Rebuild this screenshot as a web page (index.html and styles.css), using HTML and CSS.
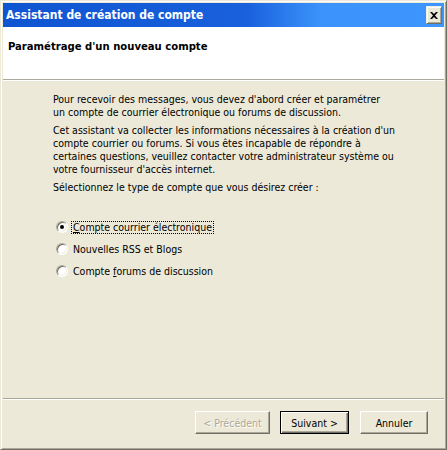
FILE: index.html
```html
<!DOCTYPE html>
<html lang="fr">
<head>
    <meta charset="UTF-8">
    <title>Assistant de création de compte</title>
    <link rel="stylesheet" href="styles.css">
</head>
<body>
    <div class="window">
        <div class="titlebar">
            <span class="title">Assistant de création de compte</span>
            <button class="close" title="Fermer">
                <svg width="8" height="7" viewBox="0 0 8 7">
                    <path d="M0 0h2l2 2 2-2h2L5 3.5 8 7H6L4 5 2 7H0l3-3.5z" fill="#000"/>
                </svg>
            </button>
        </div>
        <div class="header">
            <h1>Paramétrage d'un nouveau compte</h1>
        </div>
        <div class="content">
            <p>Pour recevoir des messages, vous devez d'abord créer et paramétrer<br>un compte de courrier électronique ou forums de discussion.</p>
            <p>Cet assistant va collecter les informations nécessaires à la création d'un<br>compte courrier ou forums. Si vous êtes incapable de répondre à<br>certaines questions, veuillez contacter votre administrateur système ou<br>votre fournisseur d'accès internet.</p>
            <p>Sélectionnez le type de compte que vous désirez créer :</p>
            <div class="choices">
                <div class="choice">
                    <span class="radio checked"></span>
                    <span class="label focused"><u>C</u>ompte courrier électronique</span>
                </div>
                <div class="choice">
                    <span class="radio"></span>
                    <span class="label">Nouvelles RSS et Blogs</span>
                </div>
                <div class="choice">
                    <span class="radio"></span>
                    <span class="label">Compte <u>f</u>orums de discussion</span>
                </div>
            </div>
        </div>
        <div class="footer">
            <button class="btn btn-back" disabled>&lt; Précédent</button>
            <button class="btn btn-next default">Suivant &gt;</button>
            <button class="btn btn-cancel">Annuler</button>
        </div>
    </div>
</body>
</html>
```

FILE: styles.css
```css
body {
    margin: 0;
    font-family: "DejaVu Sans Condensed", "DejaVu Sans", sans-serif;
    font-size: 10.5px;
    color: #000;
    background-color: #ece9d8;
}
.window {
    width: 447px;
    height: 450px;
    box-sizing: border-box;
    display: flex;
    flex-direction: column;
    padding: 2px;
    background-color: #ece9d8;
    border: 1px solid;
    border-color: #ece9d8 #716f64 #716f64 #ece9d8;
    box-shadow: inset 1px 1px #fff, inset -1px -1px #aca899;
}
.titlebar {
    flex: none;
    height: 24px;
    display: flex;
    align-items: center;
    justify-content: space-between;
    padding: 0 2px 0 3px;
    background: linear-gradient(to right, #0f55d1 0%, #1960dc 55%, #3b93fb 72%, #3d96fd 100%);
    color: white;
    font-weight: bold;
    font-size: 12px;
}
.close {
    width: 16px;
    height: 18px;
    padding: 0;
    display: flex;
    align-items: center;
    justify-content: center;
    background-color: #ece9d8;
    border: 1px solid;
    border-color: #f1efe2 #716f64 #716f64 #f1efe2;
    box-shadow: inset 1px 1px #fff, inset -1px -1px #aca899;
}
.header {
    flex: none;
    height: 53px;
    box-sizing: border-box;
    padding: 13px 5px 0;
    background-color: white;
    border-bottom: 1px solid #aca899;
}
.header h1 {
    margin: 0;
    font-size: 11.2px;
    line-height: 13px;
    font-weight: bold;
}
.content {
    flex: 1;
    padding: 12px 10px 0 50px;
    border-top: 1px solid white;
    white-space: nowrap;
}
.content p {
    margin: 0 0 5px;
    line-height: 13px;
}
.choices {
    margin-top: 22px;
}
.choice {
    display: flex;
    align-items: center;
    height: 22px;
    padding-left: 3px;
}
.radio {
    width: 12px;
    height: 12px;
    box-sizing: border-box;
    border-radius: 50%;
    background-color: white;
    border: 1px solid;
    border-color: #aca899 white white #aca899;
    box-shadow: inset 1px 1px #716f64, inset -1px -1px #f1efe2;
    display: flex;
    align-items: center;
    justify-content: center;
}
.radio.checked::after {
    content: "";
    width: 4px;
    height: 4px;
    border-radius: 50%;
    background-color: black;
}
.label {
    margin-left: 3px;
    padding: 0 1px;
    line-height: 11px;
    border: 1px dotted transparent;
}
.label.focused {
    border-color: black;
}
.footer {
    flex: none;
    height: 49px;
    box-sizing: border-box;
    display: flex;
    justify-content: flex-end;
    align-items: flex-start;
    padding: 12px 16px 0 0;
    border-top: 1px solid #aca899;
    box-shadow: inset 0 1px white;
}
.btn {
    height: 23px;
    padding: 0;
    font-family: inherit;
    font-size: 10.5px;
    color: black;
    background-color: #ece9d8;
    border: 1px solid;
    border-color: white #716f64 #716f64 white;
    box-shadow: inset -1px -1px #aca899;
}
.btn.default {
    border-color: black;
    box-shadow: inset 1px 1px white, inset -1px -1px #716f64, inset -2px -2px #aca899;
}
.btn:disabled {
    color: #aca899;
    text-shadow: 1px 1px white;
}
.btn-back {
    width: 75px;
}
.btn-next {
    width: 69px;
    margin-left: 10px;
}
.btn-cancel {
    width: 68px;
    margin-left: 11px;
}
```
